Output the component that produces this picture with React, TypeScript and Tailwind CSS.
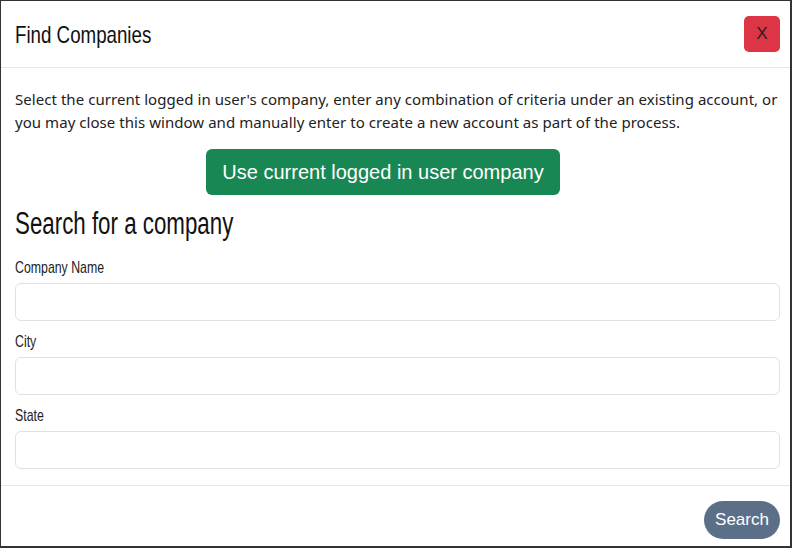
import React from "react";

const narrow = { fontFamily: '"Liberation Sans", sans-serif' };

export default function App() {
  return (
    <div className="w-[792px] h-[548px] bg-white border-l border-t border-r-2 border-b-2 border-[#333] flex flex-col overflow-hidden">
      <div className="shrink-0 flex items-center justify-between h-[67px] pl-[14px] pr-[10px] border-b border-[#e5e7eb]">
        <h1 className="inline-block text-[24px] text-[#111] leading-none mt-[1px] origin-left scale-x-[0.78]" style={narrow}>Find Companies</h1>
        <button className="w-[36px] h-[36px] rounded-[5px] bg-[#dc3545] text-[#222] text-[17px] flex items-center justify-center" style={{ fontFamily: '"Liberation Sans", sans-serif' }}>X</button>
      </div>
      <div className="flex flex-col items-start pl-[14px] pr-[10px] pt-[20px] flex-1 min-h-0">
        <p className="text-[15px] leading-[22.5px] text-[#222] tracking-[0.05px]" style={{ fontFamily: '"Noto Sans", sans-serif' }}>
          Select the current logged in user's company, enter any combination of criteria under an existing account, or you may close this window and manually enter to create a new account as part of the process.
        </p>
        <div className="flex mt-[16px]">
          <button className="h-[46px] w-[354px] ml-[191px] rounded-[6px] bg-[#198754] text-white text-[20px]" style={{ fontFamily: '"Liberation Sans", sans-serif' }}>Use current logged in user company</button>
        </div>
        <h2 className="inline-block text-[31px] leading-none mt-[13px] text-[#111] origin-left scale-x-[0.72]" style={narrow}>Search for a company</h2>
        {["Company Name", "City", "State"].map((l, i) => (
          <div key={l} className={i === 0 ? "mt-[20px] w-full" : "mt-[12px] w-full"}>
            <label className="block text-[17px] leading-[17px] text-[#222] origin-left scale-x-[0.725]" style={narrow}>{l}</label>
            <input className="block w-full h-[38px] mt-[7px] rounded-[6px] border border-[#dee2e6] bg-white" />
          </div>
        ))}
      </div>
      <div className="shrink-0 border-t border-[#e5e7eb] h-[61px] flex items-start pt-[15px] justify-end pr-[10px]">
        <button className="h-[38px] w-[76px] rounded-full bg-[#5b7088] text-white text-[17px]" style={{ fontFamily: '"Liberation Sans", sans-serif' }}>Search</button>
      </div>
    </div>
  );
}
